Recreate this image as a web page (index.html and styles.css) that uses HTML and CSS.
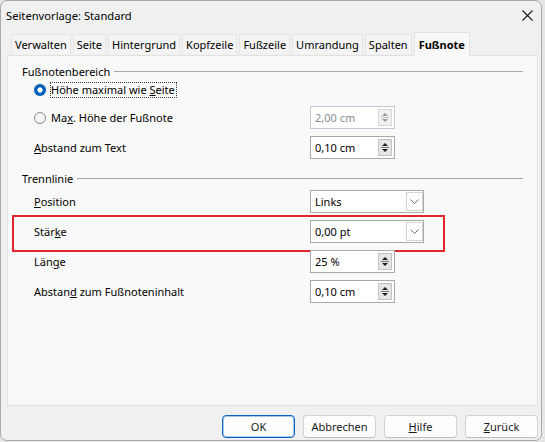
FILE: index.html
```html
<!DOCTYPE html>
<html lang="de">
<head>
    <meta charset="UTF-8">
    <meta name="viewport" content="width=device-width, initial-scale=1.0">
    <title>Seitenvorlage: Standard</title>
    <link rel="stylesheet" href="styles.css">
</head>
<body>
    <div class="window">
        <div class="titlebar">
            <span class="title">Seitenvorlage: Standard</span>
            <span class="close">
                <svg width="11" height="11" viewBox="0 0 11 11"><path d="M0.5 0.5 L10.5 10.5 M10.5 0.5 L0.5 10.5" stroke="#1b1b1b" stroke-width="1.1" fill="none"/></svg>
            </span>
        </div>

        <div class="tabs">
            <div class="tab">Verwalten</div>
            <div class="tab">Seite</div>
            <div class="tab">Hintergrund</div>
            <div class="tab">Kopfzeile</div>
            <div class="tab">Fußzeile</div>
            <div class="tab">Umrandung</div>
            <div class="tab">Spalten</div>
            <div class="tab active">Fußnote</div>
        </div>

        <div class="panel">
            <!-- Fußnotenbereich -->
            <div class="group">
                <div class="group-head"><span>Fußnotenbereich</span></div>

                <div class="row row-radio-only">
                    <div class="option">
                        <span class="radio checked"></span>
                        <span class="option-label focused">Höhe maximal wie <u>S</u>eite</span>
                    </div>
                </div>

                <div class="row row-second">
                    <div class="option">
                        <span class="radio"></span>
                        <span class="option-label">Ma<u>x</u>. Höhe der Fußnote</span>
                    </div>
                    <div class="spin disabled">
                        <span class="value">2,00 cm</span>
                        <span class="spin-btn"><i class="up"></i><i class="down"></i></span>
                    </div>
                </div>

                <div class="row">
                    <span class="label"><u>A</u>bstand zum Text</span>
                    <div class="spin">
                        <span class="value">0,10 cm</span>
                        <span class="spin-btn"><i class="up"></i><i class="down"></i></span>
                    </div>
                </div>
            </div>

            <!-- Trennlinie -->
            <div class="group group-second">
                <div class="group-head"><span>Trennlinie</span></div>

                <div class="row row-first">
                    <span class="label"><u>P</u>osition</span>
                    <div class="select">
                        <span class="value">Links</span>
                        <span class="drop-btn"><svg width="9" height="5" viewBox="0 0 9 5"><path d="M0.5 0.5 L4.5 4.5 L8.5 0.5" stroke="#6e6e6e" stroke-width="1" fill="none"/></svg></span>
                    </div>
                </div>

                <div class="row highlight">
                    <span class="label">Stär<u>k</u>e</span>
                    <div class="select">
                        <span class="value">0,00 pt</span>
                        <span class="drop-btn"><svg width="9" height="5" viewBox="0 0 9 5"><path d="M0.5 0.5 L4.5 4.5 L8.5 0.5" stroke="#6e6e6e" stroke-width="1" fill="none"/></svg></span>
                    </div>
                </div>

                <div class="row">
                    <span class="label">Län<u>g</u>e</span>
                    <div class="spin">
                        <span class="value">25 %</span>
                        <span class="spin-btn"><i class="up"></i><i class="down"></i></span>
                    </div>
                </div>

                <div class="row">
                    <span class="label">Abstan<u>d</u> zum Fußnoteninhalt</span>
                    <div class="spin">
                        <span class="value">0,10 cm</span>
                        <span class="spin-btn"><i class="up"></i><i class="down"></i></span>
                    </div>
                </div>
            </div>
        </div>

        <div class="buttons">
            <button class="btn default">OK</button>
            <button class="btn">Abbrechen</button>
            <button class="btn"><u>H</u>ilfe</button>
            <button class="btn"><u>Z</u>urück</button>
        </div>
    </div>
</body>
</html>
```

FILE: styles.css
```css
* {
    margin: 0;
    padding: 0;
    box-sizing: border-box;
    font-family: "Noto Sans", "Open Sans", sans-serif;
    font-size: 11px;
}

body {
    background-color: #e6e6e6;
    color: #000;
}

u {
    text-decoration: underline;
    text-underline-offset: 1px;
}

.window {
    width: 542px;
    height: 441px;
    background-color: #f0f0f0;
    border: 1px solid #a9a9a9;
    border-radius: 7px;
    padding-left: 6px;
    overflow: hidden;
}

/* Title bar */
.titlebar {
    height: 29px;
    display: flex;
    align-items: center;
    justify-content: space-between;
    margin-left: -1px;
}

.title {
    font-size: 11.2px;
}

.close {
    width: 20px;
    height: 20px;
    margin-right: 4px;
    display: flex;
    align-items: center;
    justify-content: center;
}

/* Tab strip */
.tabs {
    height: 25px;
    display: flex;
    align-items: flex-end;
    gap: 2px;
    padding-left: 4px;
}

.tab {
    height: 20px;
    margin-bottom: 1px;
    padding: 0 3px;
    line-height: 19px;
    background-color: #f4f4f4;
    border: 1px solid #e6e6e6;
    border-bottom: none;
    white-space: nowrap;
}

.tab.active {
    position: relative;
    z-index: 1;
    height: 24px;
    margin-bottom: -1px;
    padding: 0 4px;
    line-height: 23px;
    font-weight: bold;
    background-color: #f9f9f9;
    border-color: #e2e2e2;
}

/* Page body of the tab */
.panel {
    width: 531px;
    height: 351px;
    background-color: #f9f9f9;
    border: 1px solid #e2e2e2;
    padding: 7px 14px 0 14px;
}

.group-head {
    height: 16px;
    display: flex;
    align-items: center;
    gap: 4px;
}

.group-head::after {
    content: "";
    flex: 1;
    height: 1px;
    background-color: #a8a8a8;
    margin-top: 1px;
}

.group-second {
    margin-top: 11px;
}

.row {
    display: grid;
    grid-template-columns: 276px auto;
    align-items: center;
    height: 23px;
    margin-top: 7px;
    padding-left: 12px;
}

.row-radio-only {
    height: 20px;
    margin-top: 1px;
}

.row-second {
    margin-top: 6px;
}

.row-first {
    margin-top: 4px;
}

.option {
    display: flex;
    align-items: center;
    gap: 4px;
}

.option-label {
    border: 1px dotted transparent;
    padding: 0 1px 0 0;
    line-height: 14px;
}

.option-label.focused {
    border-color: #3a3a3a;
}

.radio {
    width: 12px;
    height: 12px;
    border-radius: 50%;
    border: 1px solid #8a8a8a;
    background-color: #f3f3f3;
    flex-shrink: 0;
}

.radio.checked {
    border: none;
    background: radial-gradient(circle, #fff 0 2.4px, #005fb8 2.9px);
}

/* Spin fields and list boxes */
.spin,
.select {
    position: relative;
    height: 23px;
    background-color: #fff;
    border: 1px solid #aaaaaa;
    display: flex;
    align-items: center;
    padding-left: 4px;
}

.spin {
    width: 85px;
}

.select {
    width: 114px;
}

.spin.disabled {
    border-color: #c3c7d6;
    color: #8d8d8d;
}

.spin-btn {
    position: absolute;
    right: 2px;
    top: 2px;
    width: 14px;
    height: 17px;
    background-color: #e6e6e6;
    border: 1px solid #c2c2c2;
    display: flex;
    flex-direction: column;
    align-items: center;
    justify-content: center;
    gap: 3px;
}

.spin-btn i {
    width: 0;
    height: 0;
    border-left: 3px solid transparent;
    border-right: 3px solid transparent;
}

.spin-btn .up {
    border-bottom: 3px solid #1e1e1e;
}

.spin-btn .down {
    border-top: 3px solid #1e1e1e;
}

.spin-btn::after {
    content: "";
    position: absolute;
    left: 2px;
    right: 2px;
    top: 7px;
    height: 1px;
    background-color: #7c7c7c;
}

.spin.disabled .spin-btn {
    background-color: #f1f1f1;
    border-color: #d7d7d7;
}

.spin.disabled .spin-btn .up {
    border-bottom-color: #9a9a9a;
}

.spin.disabled .spin-btn .down {
    border-top-color: #9a9a9a;
}

.spin.disabled .spin-btn::after {
    background-color: #c4c4c4;
}

.drop-btn {
    position: absolute;
    right: 0;
    top: 1px;
    width: 17px;
    height: 19px;
    background-color: #fff;
    border: 1px solid #d4d4d4;
    display: flex;
    align-items: center;
    justify-content: center;
}

/* red marker drawn round the Stärke row */
.highlight {
    position: relative;
}

.highlight::after {
    content: "";
    position: absolute;
    left: -10px;
    top: -5px;
    width: 429px;
    height: 33px;
    border: 2px solid #e2242d;
    pointer-events: none;
}

/* Dialog buttons */
.buttons {
    width: 531px;
    margin-top: 9px;
    display: flex;
    justify-content: flex-end;
    gap: 8px;
}

.btn {
    width: 73px;
    height: 23px;
    background-color: #fdfdfd;
    border: 1px solid #d2d2d2;
    border-bottom-color: #bdbdbd;
    border-radius: 4px;
    font-size: 11px;
    color: #1a1a1a;
}

.btn.default {
    border: 1px solid #0a64c0;
    box-shadow: inset 0 0 0 1px rgba(10, 100, 192, 0.35);
}
```
